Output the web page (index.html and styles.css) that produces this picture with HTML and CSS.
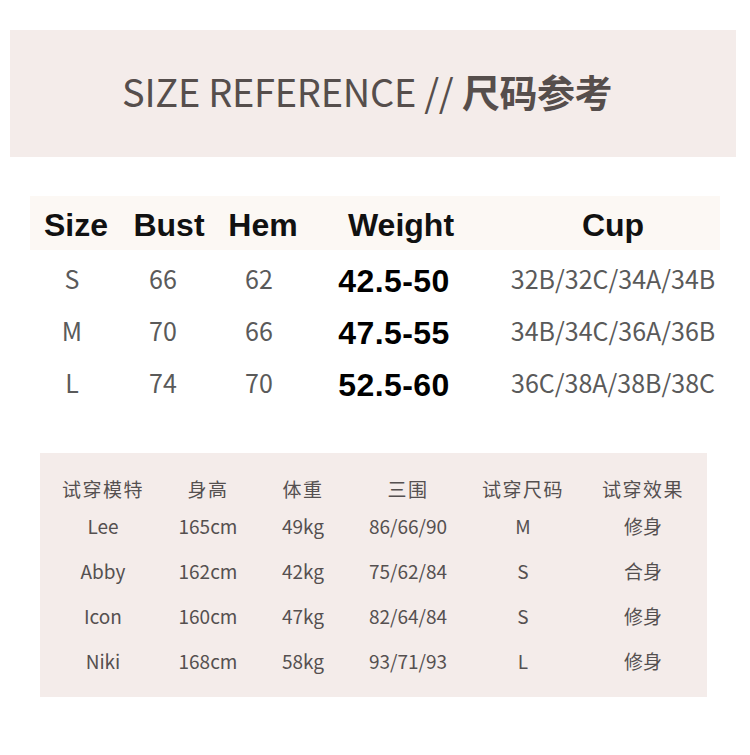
FILE: index.html
```html
<!DOCTYPE html>
<html lang="zh-CN">
<head>
<meta charset="utf-8">
<title>Size Reference</title>
<link rel="stylesheet" href="styles.css">
</head>
<body>
<header class="banner">
  <h1 class="title"><span class="title-en">SIZE REFERENCE //</span> <span class="title-cn">尺码参考</span></h1>
</header>

<section class="size-table">
  <div class="row head">
    <div class="c1">Size</div><div class="c2">Bust</div><div class="c3">Hem</div><div class="c4">Weight</div><div class="c5">Cup</div>
  </div>
  <div class="row data">
    <div class="c1">S</div><div class="c2">66</div><div class="c3">62</div><div class="c4 wt">42.5-50</div><div class="c5">32B/32C/34A/34B</div>
  </div>
  <div class="row data">
    <div class="c1">M</div><div class="c2">70</div><div class="c3">66</div><div class="c4 wt">47.5-55</div><div class="c5">34B/34C/36A/36B</div>
  </div>
  <div class="row data">
    <div class="c1">L</div><div class="c2">74</div><div class="c3">70</div><div class="c4 wt">52.5-60</div><div class="c5">36C/38A/38B/38C</div>
  </div>
</section>

<section class="model-table">
  <div class="mrow mhead">
    <div>试穿模特</div><div>身高</div><div>体重</div><div>三围</div><div>试穿尺码</div><div>试穿效果</div>
  </div>
  <div class="mrow">
    <div>Lee</div><div>165cm</div><div>49kg</div><div>86/66/90</div><div>M</div><div>修身</div>
  </div>
  <div class="mrow">
    <div>Abby</div><div>162cm</div><div>42kg</div><div>75/62/84</div><div>S</div><div>合身</div>
  </div>
  <div class="mrow">
    <div>Icon</div><div>160cm</div><div>47kg</div><div>82/64/84</div><div>S</div><div>修身</div>
  </div>
  <div class="mrow">
    <div>Niki</div><div>168cm</div><div>58kg</div><div>93/71/93</div><div>L</div><div>修身</div>
  </div>
</section>
</body>
</html>
```

FILE: styles.css
```css
html, body {
  margin: 0;
  padding: 0;
  background: #ffffff;
}

body {
  width: 750px;
  height: 755px;
  overflow: hidden;
  font-family: "Noto Sans CJK SC", "Noto Sans", sans-serif;
}

.banner {
  margin: 30px 14px 0 10px;
  height: 127px;
  background: #f4ecea;
  display: flex;
  align-items: center;
  justify-content: center;
  padding: 0 12px 6px 0;
  box-sizing: border-box;
}

.title {
  margin: 0;
  font-size: 38px;
  line-height: 1;
  color: #564e4c;
  font-weight: 400;
  white-space: nowrap;
}

.title-en {
  font-weight: 400;
  letter-spacing: -0.3px;
}

.title-cn {
  font-weight: 700;
  letter-spacing: -0.5px;
}

.size-table {
  margin: 39px 0 0 30px;
  width: 690px;
}

.row {
  display: grid;
  grid-template-columns: 92px 94px 94px 180px 230px;
  align-items: center;
  text-align: center;
}

.row.head {
  height: 54px;
  background: #fcf8f4;
  font-family: "Liberation Sans", Arial, sans-serif;
  font-weight: 700;
  font-size: 32px;
  color: #111111;
  padding-top: 4px;
  box-sizing: border-box;
  margin-bottom: 2px;
}

.row.data {
  height: 52px;
  font-size: 25px;
  color: #5a5a5a;
  font-family: "Noto Sans CJK SC", "Noto Sans", sans-serif;
}

.row .c5 {
  padding-left: 16px;
}

.row.head .c4 {
  padding-left: 2px;
}

.row.data .c1 {
  padding-right: 8px;
}

.row.data .c2 {
  padding-right: 12px;
}

.row.data .c3 {
  padding-right: 8px;
}

.row.data .wt {
  font-family: "Liberation Sans", Arial, sans-serif;
  font-weight: 700;
  font-size: 32px;
  letter-spacing: 0.4px;
  color: #000000;
  padding: 6px 12px 0 0;
}

.model-table {
  margin: 45px 0 0 40px;
  width: 667px;
  height: 244px;
  background: #f4ecea;
  padding: 20px 0 0 0;
  box-sizing: border-box;
}

.mrow {
  display: grid;
  grid-template-columns: 126px 84px 106px 104px 126px 114px;
  align-items: center;
  text-align: center;
  height: 45px;
  font-size: 19px;
  color: #555050;
}

.mrow.mhead {
  height: 30px;
  letter-spacing: 1.5px;
}
```
